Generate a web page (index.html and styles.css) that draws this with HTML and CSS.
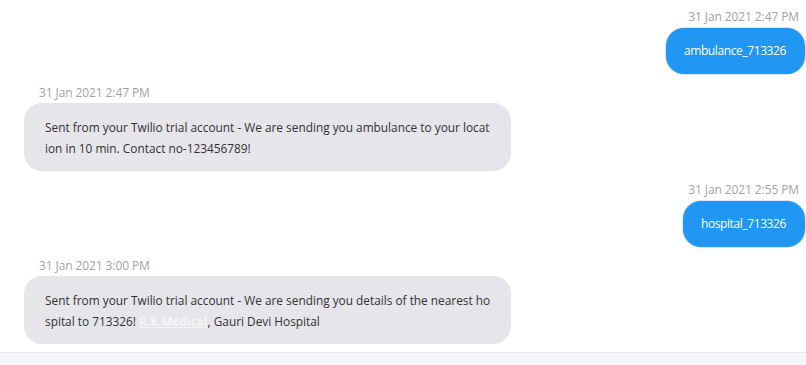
FILE: index.html
```html
<!DOCTYPE html>
<html>
<head>
<meta charset="utf-8">
<link rel="stylesheet" href="styles.css">
</head>
<body>
<div class="chat">
  <div class="msg out first">
    <div class="time">31 Jan 2021 2:47 PM</div>
    <div class="bubble">ambulance_713326</div>
  </div>
  <div class="msg in">
    <div class="time">31 Jan 2021 2:47 PM</div>
    <div class="bubble">Sent from your Twilio trial account - We are sending you ambulance to your locat<br>ion in 10 min. Contact no-123456789!</div>
  </div>
  <div class="msg out">
    <div class="time">31 Jan 2021 2:55 PM</div>
    <div class="bubble">hospital_713326</div>
  </div>
  <div class="msg in">
    <div class="time">31 Jan 2021 3:00 PM</div>
    <div class="bubble">Sent from your Twilio trial account - We are sending you details of the nearest ho<br>spital to 713326! <a class="link" href="#">R.K.Medical</a>, Gauri Devi Hospital</div>
  </div>
</div>
<div class="footer"></div>
</body>
</html>
```
FILE: styles.css
```css
html, body {
  margin: 0;
  padding: 0;
  background: #ffffff;
  font-family: "Open Sans", "Segoe UI", sans-serif;
  overflow: hidden;
}
.chat {
  height: 352px;
  padding: 0 1px 0 24px;
  box-sizing: border-box;
  display: flex;
  flex-direction: column;
}
.msg {
  display: flex;
  flex-direction: column;
}
.msg.out {
  align-items: flex-end;
  margin-top: 11px;
}
.msg.first {
  margin-top: 9px;
}
.msg.in {
  align-items: flex-start;
  margin-top: 11px;
}
.time {
  font-size: 12px;
  line-height: 16px;
  color: #a3a3a3;
  margin-bottom: 2px;
  letter-spacing: -0.1px;
}
.msg.out .time {
  margin-right: 6px;
  margin-bottom: 3px;
}
.msg.in .time {
  margin-left: 15px;
}
.bubble {
  font-size: 12px;
  line-height: 21px;
  border-radius: 18px;
}
.msg.out .bubble {
  background: #2196f3;
  color: #ffffff;
  padding: 12px 19px 13px 18px;
  letter-spacing: -0.4px;
  box-shadow: 0 0 0 1px #d6e9fb;
}
.msg.in .bubble {
  background: #e5e5ea;
  color: #333333;
  padding: 14px 21px 12px 21px;
  font-size: 11.85px;
}
.link {
  color: #f5f5f7;
  font-weight: bold;
  text-decoration: underline;
}
.footer {
  height: 13px;
  background: #f5f6f9;
  border-top: 1px solid #e8e9ee;
}
```
